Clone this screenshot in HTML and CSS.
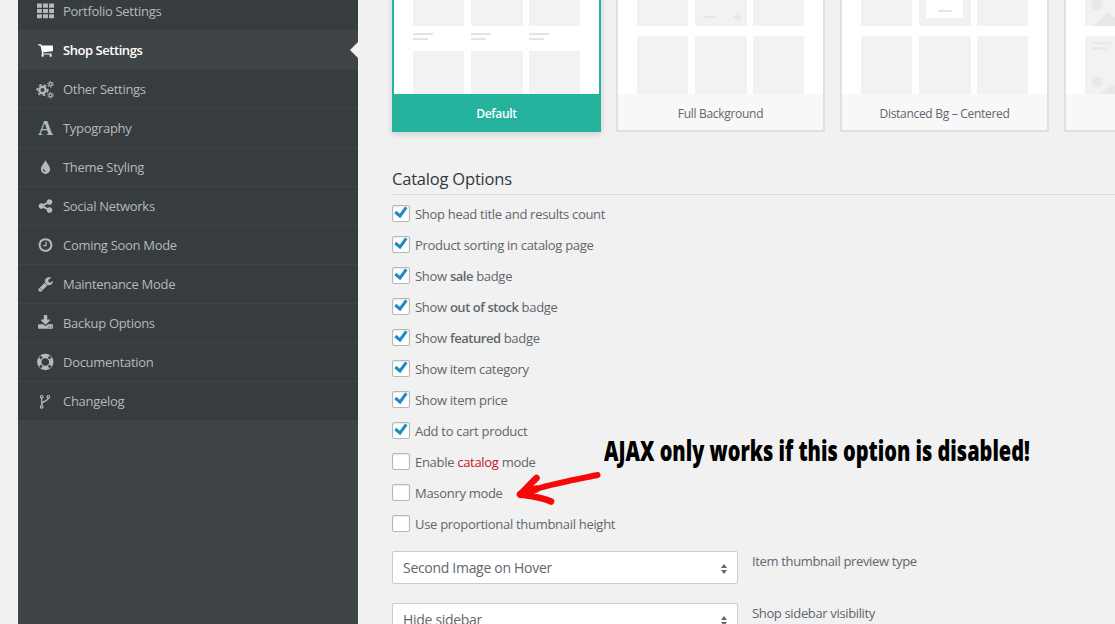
FILE: index.html
```html
<!DOCTYPE html>
<html lang="en">
<head>
<meta charset="utf-8">
<title>Shop Settings</title>
<link rel="stylesheet" href="styles.css">
</head>
<body>
<aside class="sidebar">
  <ul class="menu">
    <li class="item"><svg class="ico" viewBox="0 0 16 14"><path d="M0 0h4.600v3.900H0zM5.700 0h4.600v3.900H5.700zM11.400 0H16v3.900h-4.600zM0 5h4.600v3.900H0zM5.700 5h4.600v3.900H5.700zM11.400 5H16v3.900h-4.600zM0 10h4.600v3.900H0zM5.700 10h4.600v3.900H5.700zM11.400 10H16v3.900h-4.600z"/></svg><span>Portfolio Settings</span></li>
    <li class="item active"><svg class="ico" viewBox="0 0 1792 1792"><path d="M704 1536q0 52-38 90t-90 38-90-38-38-90 38-90 90-38 90 38 38 90zm896 0q0 52-38 90t-90 38-90-38-38-90 38-90 90-38 90 38 38 90zm128-1088v512q0 24-16.500 42.500t-40.500 21.500l-1044 122q13 60 13 70 0 16-24 64h920q26 0 45 19t19 45-19 45-45 19h-1024q-26 0-45-19t-19-45q0-11 8-31.500t16-36 21.500-40 15.500-29.500l-177-823h-204q-26 0-45-19t-19-45 19-45 45-19h256q16 0 28.500 6.500t19.500 15.500 13 24.500 8 26 5.500 29.500 4.500 26h1201q26 0 45 19t19 45z"/></svg><span>Shop Settings</span></li>
    <li class="item"><svg class="ico" viewBox="0 0 17 16"><circle class="gear-teeth" cx="5.500" cy="9" r="5.300"/><circle class="gear" cx="5.500" cy="9" r="3.200"/><circle class="gear-sm-teeth" cx="13.500" cy="3.300" r="2.800"/><circle class="gear-sm" cx="13.500" cy="3.300" r="1.600"/><circle class="gear-sm-teeth" cx="13.500" cy="14.300" r="2.800"/><circle class="gear-sm" cx="13.500" cy="14.300" r="1.600"/></svg><span>Other Settings</span></li>
    <li class="item"><span class="ico-a">A</span><span>Typography</span></li>
    <li class="item"><svg class="ico" viewBox="0 0 16 16"><path fill-rule="evenodd" d="M8 1c.6 2.400 4.600 6 4.600 9.300A4.600 4.600 0 0 1 8 15a4.600 4.600 0 0 1-4.600-4.700C3.400 7 7.400 3.400 8 1zM5.400 10.200c0 1.500 1 2.700 2.400 2.900v-1.200c-.7-.2-1.200-.9-1.200-1.700z"/></svg><span>Theme Styling</span></li>
    <li class="item"><svg class="ico" viewBox="0 0 1792 1792"><path d="M1344 1024q133 0 226.500 93.500t93.500 226.500-93.500 226.500-226.500 93.500-226.500-93.500-93.500-226.500q0-12 2-34l-360-180q-92 86-218 86-133 0-226.500-93.500t-93.500-226.500 93.500-226.500 226.500-93.500q126 0 218 86l360-180q-2-22-2-34 0-133 93.500-226.500t226.500-93.500 226.500 93.500 93.500 226.500-93.500 226.500-226.500 93.500q-126 0-218-86l-360 180q2 22 2 34t-2 34l360 180q92-86 218-86z"/></svg><span>Social Networks</span></li>
    <li class="item"><svg class="ico" viewBox="0 0 1792 1792"><path d="M1024 544v448q0 14-9 23t-23 9h-320q-14 0-23-9t-9-23v-64q0-14 9-23t23-9h224v-352q0-14 9-23t23-9h64q14 0 23 9t9 23zm416 352q0-148-73-273t-198-198-273-73-273 73-198 198-73 273 73 273 198 198 273 73 273-73 198-198 73-273zm224 0q0 209-103 385.500t-279.500 279.500-385.500 103-385.500-103-279.500-279.500-103-385.500 103-385.500 279.500-279.500 385.500-103 385.500 103 279.500 279.500 103 385.500z"/></svg><span>Coming Soon Mode</span></li>
    <li class="item"><svg class="ico" viewBox="0 0 1792 1792"><path d="M448 1472q0-26-19-45t-45-19-45 19-19 45 19 45 45 19 45-19 19-45zm644-420l-682 682q-37 37-90 37-52 0-91-37l-106-108q-38-36-38-90 0-53 38-91l681-681q39 98 114.500 173.500t173.500 114.500zm634-435q0 39-23 106-47 134-164.500 217.500t-258.500 83.500q-185 0-316.500-131.500t-131.500-316.500 131.500-316.500 316.500-131.500q58 0 121.500 16.500t107.500 46.500q16 11 16 28t-16 28l-293 169v224l193 107q5-3 79-48.500t135.500-81 70.500-35.500q15 0 23.500 10t8.500 25z"/></svg><span>Maintenance Mode</span></li>
    <li class="item"><svg class="ico" viewBox="0 0 1792 1792"><path d="M1344 1344q0-26-19-45t-45-19-45 19-19 45 19 45 45 19 45-19 19-45zm256 0q0-26-19-45t-45-19-45 19-19 45 19 45 45 19 45-19 19-45zm128-224v320q0 40-28 68t-68 28h-1472q-40 0-68-28t-28-68v-320q0-40 28-68t68-28h465l135 136q58 56 136 56t136-56l136-136h464q40 0 68 28t28 68zm-325-569q17 41-14 70l-448 448q-18 19-45 19t-45-19l-448-448q-31-29-14-70 17-39 59-39h256v-448q0-26 19-45t45-19h256q26 0 45 19t19 45v448h256q42 0 59 39z"/></svg><span>Backup Options</span></li>
    <li class="item"><svg class="ico" viewBox="0 0 17 16"><circle class="ring" cx="8.300" cy="8" r="8.200"/><circle class="ring-hole" cx="8.300" cy="8" r="3.800"/><path class="ring-cut" d="M4.800 4.500L3 2.700M11.800 4.500L13.600 2.700M4.800 11.500L3 13.300M11.800 11.500L13.600 13.300"/></svg><span>Documentation</span></li>
    <li class="item"><svg class="ico" viewBox="0 0 17 16"><path class="fork" d="M4.700 5v7.500M11.300 5c0 3.500-6.600 2.800-6.600 6.500"/><circle class="fork" cx="4.700" cy="3.800" r="1.300"/><circle class="fork" cx="11.300" cy="3.800" r="1.300"/><circle class="fork" cx="4.700" cy="13.800" r="1.300"/></svg><span>Changelog</span></li>
  </ul>
</aside>

<main class="main">
  <div class="cards">
    <div class="card selected">
      <div class="thumb default">
        <i class="c"></i><i class="c mid"></i><i class="c end"></i>
        <b class="l"></b><b class="l mid"></b><b class="l end"></b>
        <i class="c"></i><i class="c mid"></i><i class="c end"></i>
      </div>
      <div class="caption">Default</div>
    </div>
    <div class="card">
      <div class="thumb plain">
        <i class="c"></i><i class="c mid"><svg class="qty" viewBox="0 0 39 10"><path d="M0 4h13v2H0zM31 4h8v2h-8zM34 1h2v8h-2z"/></svg></i><i class="c end"></i>
        <i class="c"></i><i class="c mid"></i><i class="c end"></i>
      </div>
      <div class="caption">Full Background</div>
    </div>
    <div class="card">
      <div class="thumb plain">
        <i class="c"></i><i class="c mid"><span class="inset"><u></u></span></i><i class="c end"></i>
        <i class="c"></i><i class="c mid"></i><i class="c end"></i>
      </div>
      <div class="caption">Distanced Bg – Centered</div>
    </div>
    <div class="card">
      <div class="thumb plain">
        <i class="c"><svg class="pic" viewBox="0 0 51 66" preserveAspectRatio="none"><circle cx="12" cy="45" r="5.500"/><path d="M8 66l15-14 8 6 9-8 11 12v4z"/></svg></i><i class="c mid"></i><i class="c end"></i>
        <i class="c"><svg class="pic" viewBox="0 0 51 58"><path d="M7 6h20v2.500H7zM7 11h15v2.500H7z"/><circle cx="12" cy="46" r="5.500"/><path d="M14 58l14-10 7 10z"/></svg></i><i class="c mid"></i><i class="c end"></i>
      </div>
      <div class="caption">&nbsp;</div>
    </div>
  </div>

  <h2 class="heading">Catalog Options</h2>

  <ul class="checks">
    <li class="check"><span class="box"><svg class="tick" viewBox="0 0 16 14"><path d="M3.300 7L8 11l6.300-8.700"/></svg></span><span>Shop head title and results count</span></li>
    <li class="check"><span class="box"><svg class="tick" viewBox="0 0 16 14"><path d="M3.300 7L8 11l6.300-8.700"/></svg></span><span>Product sorting in catalog page</span></li>
    <li class="check"><span class="box"><svg class="tick" viewBox="0 0 16 14"><path d="M3.300 7L8 11l6.300-8.700"/></svg></span><span>Show <strong>sale</strong> badge</span></li>
    <li class="check"><span class="box"><svg class="tick" viewBox="0 0 16 14"><path d="M3.300 7L8 11l6.300-8.700"/></svg></span><span>Show <strong>out of stock</strong> badge</span></li>
    <li class="check"><span class="box"><svg class="tick" viewBox="0 0 16 14"><path d="M3.300 7L8 11l6.300-8.700"/></svg></span><span>Show <strong>featured</strong> badge</span></li>
    <li class="check"><span class="box"><svg class="tick" viewBox="0 0 16 14"><path d="M3.300 7L8 11l6.300-8.700"/></svg></span><span>Show item category</span></li>
    <li class="check"><span class="box"><svg class="tick" viewBox="0 0 16 14"><path d="M3.300 7L8 11l6.300-8.700"/></svg></span><span>Show item price</span></li>
    <li class="check"><span class="box"><svg class="tick" viewBox="0 0 16 14"><path d="M3.300 7L8 11l6.300-8.700"/></svg></span><span>Add to cart product</span></li>
    <li class="check"><span class="box"></span><span>Enable <em class="red">catalog</em> mode</span></li>
    <li class="check"><span class="box"></span><span>Masonry mode</span></li>
    <li class="check"><span class="box"></span><span>Use proportional thumbnail height</span></li>
  </ul>

  <div class="field">
    <div class="select">Second Image on Hover</div>
    <span class="hint">Item thumbnail preview type</span>
  </div>
  <div class="field">
    <div class="select">Hide sidebar</div>
    <span class="hint">Shop sidebar visibility</span>
  </div>

  <div class="note">AJAX only works if this option is disabled!</div>
  <svg class="arrow" viewBox="510 465 100 45"><path class="shaft" d="M597.500 475C578 479 556 483 536 489"/><path class="head" d="M536.500 478C530 484 526 489 520 494.500C530 496 542 497 551 501.500"/><path class="shaft-thick" d="M536 489L521 494.500"/></svg>
</main>
</body>
</html>
```
FILE: styles.css
```css
* { box-sizing: border-box; }
html, body { margin: 0; height: 100%; overflow: hidden; }
body {
  display: flex;
  background: #f1f1f1;
  font-family: "Open Sans", "Noto Sans", sans-serif;
  font-size: 13px;
  letter-spacing: -0.3px;
  color: #5f666d;
}

/* sidebar */
.sidebar {
  flex: none;
  width: 340px;
  margin-left: 18px;
  background: #3f4447;
}
.menu { list-style: none; margin: -8px 0 0; padding: 0; }
.item {
  position: relative;
  display: flex;
  align-items: center;
  height: 39px;
  padding-left: 19px;
  gap: 9px;
  background: #373c3f;
  border-bottom: 1px solid #3f4447;
  color: #b4b9be;
}
.item.active {
  background: #3f4447;
  color: #fff;
  font-weight: 600;
  letter-spacing: -0.45px;
}
.item.active::after {
  content: "";
  position: absolute;
  right: 0;
  top: 11px;
  border: 8px solid transparent;
  border-left: 0;
  border-right-color: #f1f1f1;
}
.ico { flex: none; width: 17px; height: 16px; fill: currentColor; overflow: visible; }
.ico-a {
  flex: none;
  width: 17px;
  font: bold 21px/1 "Liberation Serif", serif;
  letter-spacing: 0;
  text-align: center;
}
.gear { fill: none; stroke: currentColor; stroke-width: 2.400; }
.gear-teeth { fill: none; stroke: currentColor; stroke-width: 1.500; stroke-dasharray: 2.600 2.600; }
.gear-sm { fill: none; stroke: currentColor; stroke-width: 1.200; }
.gear-sm-teeth { fill: none; stroke: currentColor; stroke-width: 1; stroke-dasharray: 1.500 1.430; }
.ring { fill: currentColor; }
.ring-hole { fill: #373c3f; }
.ring-cut { fill: none; stroke: #373c3f; stroke-width: 2.600; }
.fork { fill: none; stroke: currentColor; stroke-width: 1.200; }

/* main column */
.main { position: relative; flex: 1; min-width: 0; padding-left: 34px; }
.cards { display: flex; gap: 15px; margin-top: -42px; width: 900px; }
.card {
  flex: none;
  width: 209px;
  height: 174px;
  border: 2px solid #e0e0e0;
  background: #f8f8f8;
  display: flex;
  flex-direction: column;
}
.card.selected {
  border-color: #25b39e;
  background: #25b39e;
  box-shadow: 0 2px 6px rgba(0, 0, 0, .15);
}
.thumb {
  height: 134px;
  flex: none;
  background: #fff;
  display: grid;
  grid-template-columns: 51px 60px 56px;
  padding: 0 19px;
  overflow: hidden;
}
.thumb.default { grid-template-rows: 66px 25px 43px; }
.thumb.plain { grid-template-rows: 66px 58px; row-gap: 10px; }
.c { display: block; position: relative; background: #f2f2f2; }
.c.mid { margin-left: 7px; margin-right: 1px; }
.c.end { margin-left: 5px; }
.l { display: block; padding-top: 7px; }
.l::before, .l::after { content: ""; display: block; height: 2px; background: #e4e4e4; }
.l::before { width: 20px; margin-bottom: 3px; }
.l::after { width: 15px; }
.l.mid { margin-left: 7px; }
.l.end { margin-left: 5px; }
.qty { display: block; position: absolute; left: 8px; top: 52px; width: 39px; height: 10px; fill: #e6e6e6; }
.inset {
  display: flex;
  justify-content: center;
  position: absolute;
  left: 7px;
  right: 8px;
  top: 0;
  height: 58px;
  padding-top: 50px;
  background: #fff;
}
.inset u { display: block; width: 14px; height: 2px; background: #e4e4e4; }
.pic { display: block; width: 51px; height: 100%; fill: #e8e8e8; }
.caption {
  flex: 1;
  display: flex;
  align-items: center;
  justify-content: center;
  padding-top: 2px;
  font-size: 12px;
}
.selected .caption { color: #fff; font-weight: 600; }

/* catalog */
.heading {
  margin: 35px 0 0;
  height: 28px;
  font-size: 16.500px;
  font-weight: 400;
  line-height: 24px;
  letter-spacing: -0.2px;
  color: #32373c;
  border-bottom: 1px solid #ddd;
}
.checks {
  list-style: none;
  margin: 10px 0 -1px;
  padding: 0;
  display: flex;
  flex-direction: column;
  gap: 13px;
}
.check { display: flex; align-items: flex-start; gap: 5px; height: 18px; line-height: 18px; }
.box {
  position: relative;
  flex: none;
  width: 18px;
  height: 17px;
  background: #fff;
  border: 1px solid #b4b9be;
  border-radius: 2px;
  box-shadow: inset 0 1px 2px rgba(0, 0, 0, .1);
}
.tick {
  position: absolute;
  left: -1px;
  top: -1px;
  width: 16px;
  height: 14px;
  fill: none;
  stroke: #1e8cbe;
  stroke-width: 3;
}
strong { font-weight: 600; letter-spacing: -0.45px; }
.red { color: #c3162f; font-style: normal; }

/* selects */
.field { display: flex; gap: 14px; margin-top: 19px; }
.select {
  position: relative;
  flex: none;
  width: 346px;
  height: 33px;
  padding-left: 10px;
  line-height: 32px;
  font-size: 14px;
  background: #fff;
  border: 1px solid #ccc;
  border-radius: 2px;
}
.select::before, .select::after {
  content: "";
  position: absolute;
  right: 10px;
  border: 3.500px solid transparent;
  border-top-width: 0;
  border-bottom: 4px solid #666;
  top: 12px;
}
.select::after {
  top: 18px;
  border-bottom-width: 0;
  border-top: 4px solid #666;
}
.hint { line-height: 20px; letter-spacing: -0.35px; }

/* annotation */
.note {
  position: absolute;
  left: 246px;
  top: 431px;
  font: 800 28px/38px "Open Sans", "Liberation Sans", sans-serif;
  letter-spacing: 0;
  color: #000;
  white-space: nowrap;
  transform: scaleX(.713);
  transform-origin: 0 50%;
}
.arrow { position: absolute; left: 152px; top: 465px; width: 100px; height: 45px; overflow: visible; }
.shaft { fill: none; stroke: #f60808; stroke-width: 6; stroke-linecap: round; }
.shaft-thick { fill: none; stroke: #f60808; stroke-width: 7.500; stroke-linecap: round; }
.head { fill: none; stroke: #f60808; stroke-width: 6.500; stroke-linecap: round; stroke-linejoin: round; }
```
